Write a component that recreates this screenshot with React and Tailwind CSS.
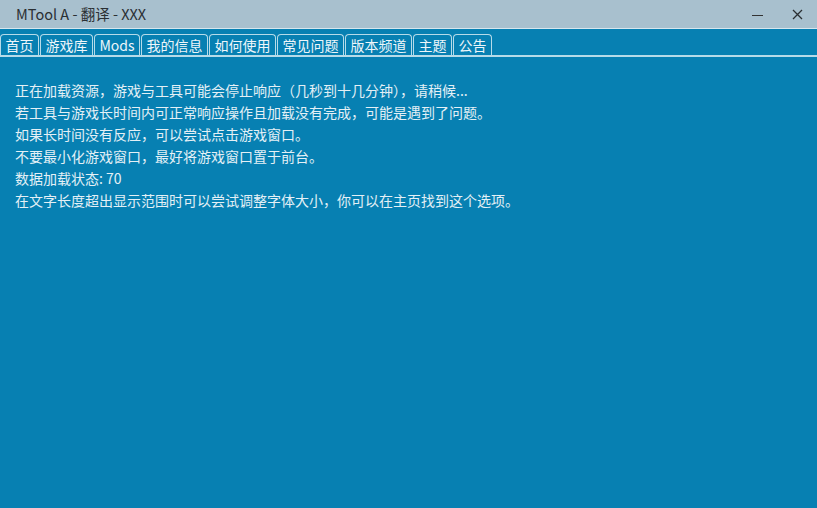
import { useState } from "react";

const tabs = ["首页", "游戏库", "Mods", "我的信息", "如何使用", "常见问题", "版本频道", "主题", "公告"];

const lines = [
  "正在加载资源，游戏与工具可能会停止响应（几秒到十几分钟），请稍候...",
  "若工具与游戏长时间内可正常响应操作且加载没有完成，可能是遇到了问题。",
  "如果长时间没有反应，可以尝试点击游戏窗口。",
  "不要最小化游戏窗口，最好将游戏窗口置于前台。",
  "数据加载状态: 70",
  "在文字长度超出显示范围时可以尝试调整字体大小，你可以在主页找到这个选项。",
];

const font = { fontFamily: '"Microsoft YaHei", "Noto Sans CJK SC", sans-serif' };

export default function App() {
  const [active, setActive] = useState(0);

  return (
    <div className="w-[817px] h-[508px] flex flex-col bg-[#0780b2] overflow-hidden" style={font}>
      {/* Title bar */}
      <div className="h-[29px] shrink-0 flex items-center bg-[#a8c0ce] border-b border-[#d6e6ee]">
        <div className="pl-4 text-[14.5px] text-[#2a2f33] leading-none">MTool A - 翻译 - XXX</div>
        <div className="ml-auto flex items-center h-full">
          <button className="w-[40px] h-full flex items-center justify-center">
            <div className="w-[11px] h-[1px] bg-[#333] mt-[3px]" />
          </button>
          <button className="w-[40px] h-full flex items-center justify-center">
            <svg width="11" height="11" viewBox="0 0 11 11" stroke="#2a2f33" strokeWidth="1.3">
              <path d="M1 1L10 10M10 1L1 10" />
            </svg>
          </button>
        </div>
      </div>

      {/* Tabs */}
      <div className="flex items-end pt-[5px] gap-[1px] bg-[#0780b2] border-b-2 border-[#b6dbe9]">
        {tabs.map((t, i) => (
          <button
            key={t}
            onClick={() => setActive(i)}
            className="h-[21px] px-[4.5px] border border-b-0 border-[#b6dbe9] rounded-t-[4px] text-[14px] leading-none text-[#eef6fa] flex items-center"
          >
            {t}
          </button>
        ))}
      </div>

      {/* Content */}
      <div className="flex-1 pl-[15px] pt-[22px] text-[14px] text-[#e4f0f6] flex flex-col">
        {lines.map((l) => (
          <div key={l} className="h-[22px] leading-[22px]">{l}</div>
        ))}
      </div>
    </div>
  );
}
